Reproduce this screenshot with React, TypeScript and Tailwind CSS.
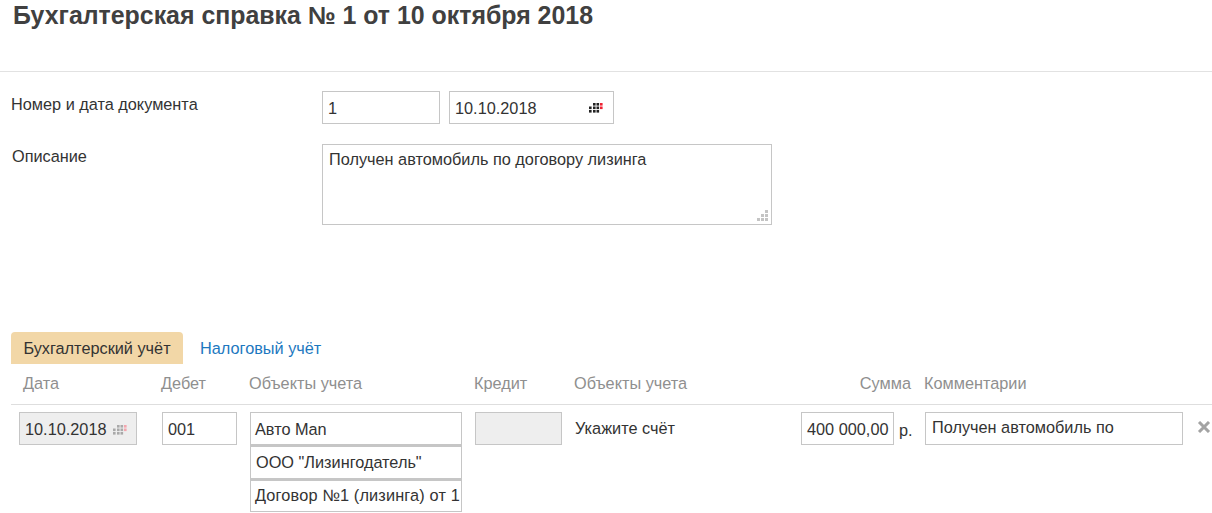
const columns = "grid grid-cols-[150px_88px_225px_100px_226px_124px_1fr]";

function CalendarIcon({ muted }: { muted?: boolean }) {
  const dark = muted ? "#a9a9a9" : "#222222";
  const red = muted ? "#f3a6ae" : "#ee2233";
  const dots = [
    [4, 0, dark],
    [7.5, 0, dark],
    [11, 0, red],
    [0, 3.5, dark],
    [4, 3.5, dark],
    [7.5, 3.5, dark],
    [11, 3.5, red],
    [0, 7, dark],
    [4, 7, dark],
    [7.5, 7, dark],
  ] as const;
  return (
    <svg width="14" height="10" viewBox="0 0 14 10" className="shrink-0">
      {dots.map(([x, y, fill]) => (
        <rect key={`${x}-${y}`} x={x} y={y} width="2.6" height="2.6" fill={fill} />
      ))}
    </svg>
  );
}

function ResizeGrip() {
  const dots = [
    [8, 0],
    [4, 4],
    [8, 4],
    [0, 8],
    [4, 8],
    [8, 8],
  ];
  return (
    <svg width="11" height="11" viewBox="0 0 11 11" className="absolute right-[3px] bottom-[3px]">
      {dots.map(([x, y]) => (
        <rect key={`${x}-${y}`} x={x} y={y} width="3" height="3" fill="#c4c4c4" />
      ))}
    </svg>
  );
}

function Box({ className, children }: { className?: string; children?: React.ReactNode }) {
  return (
    <div className={`flex h-[33px] items-center border border-[#c6c6c6] px-[5px] text-[#333333] ${className ?? ""}`}>
      {children}
    </div>
  );
}

export default function App() {
  return (
    <main className="h-[513px] w-[1212px] overflow-hidden bg-white font-['Liberation_Sans',Arial,sans-serif] text-[16.3px] text-[#333333]">
      <header className="h-[72px] border-b border-[#e2e2e2] pl-[13px]">
        <h1 className="text-[24.9px] leading-[30px] font-bold text-[#404040]">
          Бухгалтерская справка № 1 от 10 октября 2018
        </h1>
      </header>

      <section className="pt-[19px] pl-[11px]">
        <div className="flex">
          <div className="w-[311px] pt-[2px] leading-[22px]">Номер и дата документа</div>
          <Box className="w-[118px] pt-[2px]">1</Box>
          <Box className="ml-[9px] w-[165px] justify-between pt-[1px] pr-[10px]">
            <span>10.10.2018</span>
            <CalendarIcon />
          </Box>
        </div>
        <div className="mt-[20px] flex">
          <div className="w-[311px] pt-[1px] pl-[1px] leading-[22px]">Описание</div>
          <div className="relative h-[81px] w-[450px] border border-[#c6c6c6] px-[6px] pt-[4px] leading-[20px]">
            Получен автомобиль по договору лизинга
            <ResizeGrip />
          </div>
        </div>
      </section>

      <section className="mt-[107px]">
        <div className="flex items-center pl-[11px]">
          <div className="flex h-[32px] w-[172px] items-center justify-center rounded-t-[4px] bg-[#f2d7a7]">
            Бухгалтерский учёт
          </div>
          <a className="ml-[17px] text-[#1c78c0]">Налоговый учёт</a>
        </div>

        <div className="ml-[11px] border-b border-[#dedede]">
          <div className={`${columns} h-[40px] items-center pb-[2px] text-[#8f8f8f]`}>
            <div className="pl-[12px]">Дата</div>
            <div>Дебет</div>
            <div>Объекты учета</div>
            <div>Кредит</div>
            <div>Объекты учета</div>
            <div className="pr-[13px] text-right">Сумма</div>
            <div>Комментарии</div>
          </div>
        </div>

        <div className={`${columns} ml-[11px] pt-[7px]`}>
          <div className="pl-[8px]">
            <Box className="w-[118px] justify-between bg-[#eeeeee] pt-[2px] pr-[9px]">
              <span>10.10.2018</span>
              <CalendarIcon muted />
            </Box>
          </div>
          <div className="pl-[1px]">
            <Box className="w-[75px] pt-[2px]">001</Box>
          </div>
          <div className="pl-[1px]">
            <Box className="w-[212px] pt-[2px] pl-[4px]">Авто Man</Box>
            <Box className="h-[34px] w-[212px] border-t-2">ООО "Лизингодатель"</Box>
            <Box className="w-[212px] border-t-2 pb-[2px] pl-[4px] tracking-[0.16px] whitespace-nowrap">
              Договор №1 (лизинга) от 1
            </Box>
          </div>
          <div className="pl-[1px]">
            <Box className="w-[87px] bg-[#eeeeee]" />
          </div>
          <div className="flex h-[33px] items-center pl-[1px]">Укажите счёт</div>
          <div className="flex h-[33px] items-start pl-[1px]">
            <Box className="w-[93px] pt-[2px] whitespace-nowrap">400 000,00</Box>
            <span className="ml-[5px] self-center pt-[3px]">р.</span>
          </div>
          <div className="flex items-start pl-[1px]">
            <Box className="h-[27px] w-[258px] pr-0 pb-[2px] pl-[6px]">Получен автомобиль по</Box>
            <svg width="14" height="12" viewBox="0 0 14 12" className="mt-[9px] ml-[14px]">
              <path d="M2 1 L12 11 M12 1 L2 11" stroke="#a3a3a3" strokeWidth="3" />
            </svg>
          </div>
        </div>
      </section>
    </main>
  );
}
